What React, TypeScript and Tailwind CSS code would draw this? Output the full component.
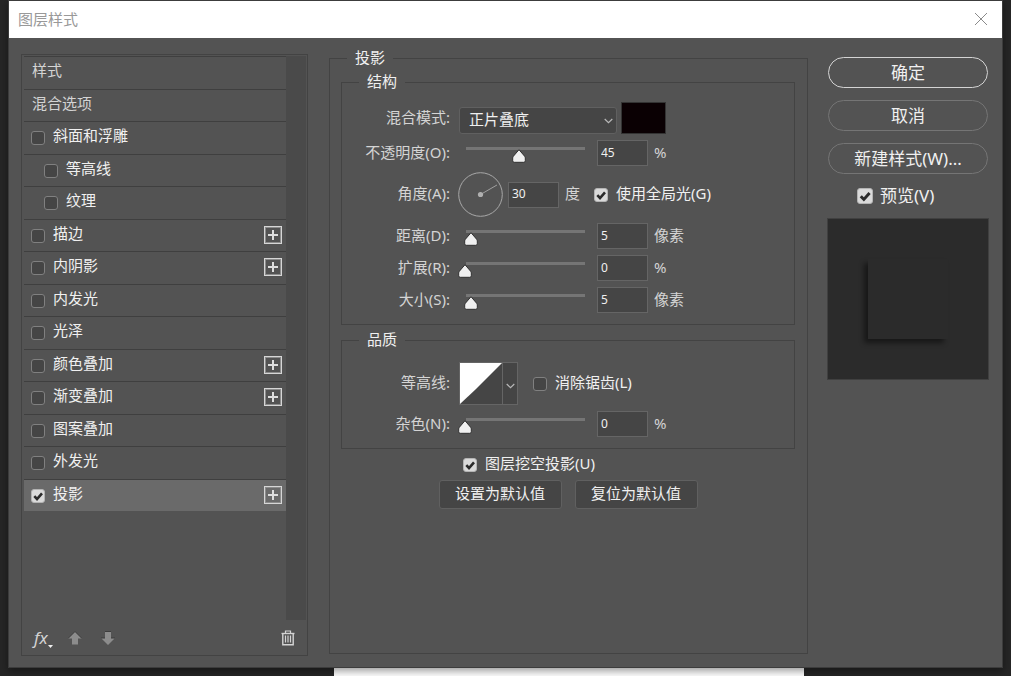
import React, { useState } from 'react'

const styleRows = [
  { id: 'bevel', label: '斜面和浮雕' },
  { id: 'bevelContour', label: '等高线', nested: true },
  { id: 'texture', label: '纹理', nested: true },
  { id: 'stroke', label: '描边', plus: true },
  { id: 'innerShadow', label: '内阴影', plus: true },
  { id: 'innerGlow', label: '内发光' },
  { id: 'satin', label: '光泽' },
  { id: 'colorOverlay', label: '颜色叠加', plus: true },
  { id: 'gradientOverlay', label: '渐变叠加', plus: true },
  { id: 'patternOverlay', label: '图案叠加' },
  { id: 'outerGlow', label: '外发光' },
  { id: 'dropShadow', label: '投影', plus: true },
]

type CheckProps = {
  id: string
  checked: boolean
  onChange: () => void
  large?: boolean
}

function Check({ id, checked, onChange, large }: CheckProps) {
  return (
    <span className={large ? 'relative block size-4 shrink-0' : 'relative block size-[14px] shrink-0'}>
      <input
        id={id}
        type="checkbox"
        checked={checked}
        onChange={onChange}
        className="block size-full appearance-none rounded-[3px] border border-[#808080] bg-[#454545] checked:border-[#b4b4b4] checked:bg-[#dadada]"
      />
      {checked && (
        <svg viewBox="0 0 14 14" className="pointer-events-none absolute inset-0 size-full" fill="none">
          <path d="M3.3 7.2 L6 10 L11 4.4" stroke="#2a2a2a" strokeWidth="2.6" />
        </svg>
      )}
    </span>
  )
}

function Chevron() {
  return (
    <svg width="9" height="6" viewBox="0 0 9 6" fill="none">
      <path d="M0.7 1 L4.5 4.6 L8.3 1" stroke="#b8b8b8" strokeWidth="1.2" />
    </svg>
  )
}

type NumberBoxProps = {
  id: string
  value: number
  onChange: (value: number) => void
}

function NumberBox({ id, value, onChange }: NumberBoxProps) {
  return (
    <input
      id={id}
      type="text"
      value={value}
      onChange={(e) => onChange(Number(e.target.value) || 0)}
      className="h-[26px] w-[51px] shrink-0 border border-[#656565] bg-[#454545] px-[3px] pb-[2px] text-xs text-[#f0f0f0]"
    />
  )
}

type SliderRowProps = {
  id: string
  label: string
  unit: string
  start: number
}

function SliderRow({ id, label, unit, start }: SliderRowProps) {
  const [value, setValue] = useState(start)

  return (
    <div className="flex items-center">
      <label htmlFor={id} className="w-[108px] shrink-0 pb-[3px] text-right">{label}</label>
      <div className="relative ml-4 h-[26px] w-[119px] shrink-0 pt-[7px]">
        <div className="h-[3px] bg-[#757575]" />
        <svg
          width="14"
          height="14"
          viewBox="0 0 14 14"
          className="absolute top-[9px] -ml-2"
          style={{ left: `${Math.min(value, 100)}%` }}
        >
          <path
            d="M7 0.7 L12.6 7.2 Q13.3 8.1 13.3 9 V11.8 Q13.3 13.3 11.8 13.3 H2.2 Q0.7 13.3 0.7 11.8 V9 Q0.7 8.1 1.4 7.2 Z"
            fill="#f0f0f0"
            stroke="#303030"
          />
        </svg>
        <input
          type="range"
          min="0"
          max="100"
          aria-label={label}
          value={value}
          onChange={(e) => setValue(Number(e.target.value))}
          className="absolute inset-0 size-full opacity-0"
        />
      </div>
      <div className="ml-3 flex items-center gap-[6px]">
        <NumberBox id={id} value={value} onChange={setValue} />
        <span className="pb-[3px]">{unit}</span>
      </div>
    </div>
  )
}

function PlusIcon() {
  return (
    <svg width="18" height="18" viewBox="0 0 18 18" fill="none">
      <rect x="0.5" y="0.5" width="17" height="17" stroke="#d6d6d6" />
      <rect x="1.5" y="1.5" width="15" height="15" stroke="#8c8c8c" />
      <path d="M4 9 H14 M9 4 V14" stroke="#dedede" strokeWidth="2" />
    </svg>
  )
}

function StyleList() {
  const [enabled, setEnabled] = useState<Record<string, boolean>>({ dropShadow: true })

  const toggleStyle = (id: string) => {
    setEnabled((prevState) => ({ ...prevState, [id]: !prevState[id] }))
  }

  return (
    <aside className="mt-[5px] flex w-[287px] shrink-0 flex-col border border-[#434343] pt-px pr-px pl-[2px]">
      <div className="flex flex-1">
        <ul className="flex-1">
          <li className="flex items-center border-t border-[#3f3f3f] pb-[6px] pl-2 text-[#d4d4d4] odd:h-[33px] even:h-8">样式</li>
          <li className="flex items-center border-t border-[#3f3f3f] pb-[6px] pl-2 text-[#d4d4d4] odd:h-[33px] even:h-8">混合选项</li>
          {styleRows.map((row) => (
            <li
              key={row.id}
              className={`flex items-center border-t border-[#3f3f3f] pr-1 odd:h-[33px] even:h-8 ${row.nested ? 'pl-5' : 'pl-[7px]'} ${row.id === 'dropShadow' ? 'bg-[#6a6a6a]' : ''}`}
            >
              <Check id={row.id} checked={!!enabled[row.id]} onChange={() => toggleStyle(row.id)} />
              <label htmlFor={row.id} className="flex-1 pb-[6px] pl-2">{row.label}</label>
              {row.plus && (
                <button type="button" aria-label={`${row.label} +`} className="pb-[2px]">
                  <PlusIcon />
                </button>
              )}
            </li>
          ))}
        </ul>
        <div className="w-5 bg-[#4a4a4a]" />
      </div>
      <div className="flex h-[35px] items-center pr-[11px] pl-[10px]">
        <button type="button" className="flex items-end text-[17px] leading-5 text-[#d4d4d4] italic">
          fx
          <svg width="5" height="3" viewBox="0 0 5 3">
            <path d="M0 0 H5 L2.5 3 Z" fill="#f0f0f0" />
          </svg>
        </button>
        <button type="button" aria-label="上移" className="ml-[15px]">
          <svg width="14" height="14" viewBox="0 0 14 14">
            <path d="M7 0.5 L14 7.5 H10 V13.5 H4 V7.5 H0 Z" fill="#8c8c8c" />
            <path d="M0 7.5 L7 0.5 L14 7.5" fill="none" stroke="#3c3c3c" />
          </svg>
        </button>
        <button type="button" aria-label="下移" className="ml-[19px]">
          <svg width="14" height="14" viewBox="0 0 14 14">
            <path d="M4 0.5 H10 V7 H14 L7 14 L0 7 H4 Z" fill="#8c8c8c" />
            <path d="M4 0.5 H10 M0 7 H4 M10 7 H14" fill="none" stroke="#3c3c3c" />
          </svg>
        </button>
        <button type="button" aria-label="删除" className="ml-auto">
          <svg width="14" height="16" viewBox="0 0 14 16" fill="none" stroke="#d4d4d4">
            <path d="M0.5 3.5 H13.5" strokeWidth="1.4" />
            <path d="M4.5 3 V1 H9.5 V3" strokeWidth="1.2" />
            <path d="M1.8 4 V14.7 H12.2 V4" strokeWidth="1.4" />
            <path d="M4.5 5.5 V12.5 M7 5.5 V12.5 M9.5 5.5 V12.5" strokeWidth="1.2" />
          </svg>
        </button>
      </div>
    </aside>
  )
}

function StructureGroup() {
  const [angle, setAngle] = useState(30)
  const [globalLight, setGlobalLight] = useState(true)

  const rad = (angle * Math.PI) / 180

  return (
    <fieldset className="border border-[#434343]">
      <legend className="ml-[17px] px-2 pb-[2px] leading-4 text-[#f0f0f0]">结构</legend>
      <div className="flex flex-col gap-[6px] pt-[11px] pb-[11px]">
        <div className="flex items-center">
          <label htmlFor="blendMode" className="w-[108px] shrink-0 pb-[3px] text-right">混合模式:</label>
          <div className="relative mt-1 ml-[9px] w-[158px] shrink-0">
            <select
              id="blendMode"
              className="block h-[27px] w-full appearance-none rounded-[3px] border border-[#606060] bg-[#454545] pb-[3px] pl-[9px] text-[#f0f0f0]"
            >
              <option>正片叠底</option>
              <option>正常</option>
            </select>
            <span className="pointer-events-none absolute top-[11px] right-1">
              <Chevron />
            </span>
          </div>
          <button type="button" aria-label="阴影颜色" className="ml-1 h-8 w-[45px] border border-[#333333] bg-[#0a0003]" />
        </div>
        <SliderRow id="opacity" label="不透明度(O):" unit="%" start={45} />
        <div className="flex items-center">
          <label htmlFor="angle" className="w-[108px] shrink-0 pb-[3px] text-right">角度(A):</label>
          <svg width="45" height="45" viewBox="0 0 45 45" fill="none" className="ml-2 shrink-0">
            <circle cx="22.5" cy="22.5" r="21.8" stroke="#a8a8a8" />
            <line
              x1="22.5"
              y1="22.5"
              x2={22.5 + 19 * Math.cos(rad)}
              y2={22.5 - 19 * Math.sin(rad)}
              stroke="#a0a0a0"
            />
            <circle cx="22.5" cy="22.5" r="2.6" fill="#b0b0b0" />
          </svg>
          <div className="ml-[5px] flex items-center gap-[6px]">
            <NumberBox id="angle" value={angle} onChange={setAngle} />
            <span className="pb-[3px]">度</span>
          </div>
          <div className="ml-[14px] flex items-center gap-2 text-[#f0f0f0]">
            <Check id="globalLight" checked={globalLight} onChange={() => setGlobalLight(!globalLight)} />
            <label htmlFor="globalLight" className="pb-[3px]">使用全局光(G)</label>
          </div>
        </div>
        <SliderRow id="distance" label="距离(D):" unit="像素" start={5} />
        <SliderRow id="spread" label="扩展(R):" unit="%" start={0} />
        <SliderRow id="size" label="大小(S):" unit="像素" start={5} />
      </div>
    </fieldset>
  )
}

function QualityGroup() {
  const [antiAlias, setAntiAlias] = useState(false)

  return (
    <fieldset className="border border-[#434343]">
      <legend className="ml-[17px] px-2 pb-[2px] leading-4 text-[#f0f0f0]">品质</legend>
      <div className="flex flex-col gap-[6px] pt-[13px] pb-[11px]">
        <div className="flex items-center">
          <label htmlFor="contour" className="w-[108px] shrink-0 pb-[3px] text-right">等高线:</label>
          <button id="contour" type="button" className="ml-[9px] flex h-[43px] w-[59px] shrink-0 border border-[#656565] bg-[#454545]">
            <svg width="42" height="41" viewBox="0 0 42 41">
              <path d="M0 0 H42 L29 13 L16 26 L0 41 Z" fill="#ffffff" />
            </svg>
            <span className="flex h-full flex-1 items-center justify-center border-l border-[#656565] pt-1">
              <Chevron />
            </span>
          </button>
          <div className="ml-[15px] flex items-center gap-2 text-[#f0f0f0]">
            <Check id="antiAlias" checked={antiAlias} onChange={() => setAntiAlias(!antiAlias)} />
            <label htmlFor="antiAlias" className="pb-[3px]">消除锯齿(L)</label>
          </div>
        </div>
        <SliderRow id="noise" label="杂色(N):" unit="%" start={0} />
      </div>
    </fieldset>
  )
}

export default function App() {
  const [knockout, setKnockout] = useState(true)
  const [preview, setPreview] = useState(true)

  return (
    <div className="flex min-h-screen flex-col bg-[#262626] font-['Noto_Sans','Noto_Sans_CJK_SC',sans-serif] text-[15px] leading-[18px] text-[#f0f0f0]">
      <div className="relative mx-2 flex flex-1 flex-col border border-[#3c3c3c] bg-[#535353] shadow-[0_3px_8px_rgba(0,0,0,0.4)]">
        <header className="flex h-[37px] shrink-0 items-center justify-between bg-white pr-[14px] pb-[2px] pl-[9px] text-[#999999]">
          <h1>图层样式</h1>
          <button type="button" aria-label="关闭">
            <svg width="14" height="14" viewBox="0 0 14 14" fill="none">
              <path d="M1 1 L13 13 M13 1 L1 13" stroke="#8a8a8a" />
            </svg>
          </button>
        </header>

        <main className="flex flex-1 pt-[11px] pr-[14px] pb-[11px] pl-3">
          <StyleList />

          <fieldset className="mr-5 mb-[2px] ml-[21px] min-w-0 flex-1 border border-[#434343] pr-3 pl-[11px]">
            <legend className="ml-[6px] px-2 pb-[2px] leading-4">投影</legend>
            <div className="flex flex-col gap-[6px] pt-[6px] text-[#d4d4d4]">
              <StructureGroup />
              <QualityGroup />
              <div className="ml-[122px] flex items-center gap-2 text-[#f0f0f0]">
                <Check id="knockout" checked={knockout} onChange={() => setKnockout(!knockout)} />
                <label htmlFor="knockout" className="pb-[3px] leading-4">图层挖空投影(U)</label>
              </div>
              <div className="flex justify-center gap-[13px] text-[#f0f0f0]">
                <button type="button" className="h-[29px] w-[123px] rounded-[3px] border border-[#606060] bg-[#454545] pb-1">
                  设置为默认值
                </button>
                <button type="button" className="h-[29px] w-[123px] rounded-[3px] border border-[#606060] bg-[#454545] pb-1">
                  复位为默认值
                </button>
              </div>
            </div>
          </fieldset>

          <div className="mt-2 flex w-40 shrink-0 flex-col gap-3 text-[17px] leading-5">
            <button type="button" className="h-[31px] rounded-full border border-[#d4d4d4]">确定</button>
            <button type="button" className="h-[31px] rounded-full border border-[#757575]">取消</button>
            <button type="button" className="h-[31px] rounded-full border border-[#757575]">新建样式(W)...</button>
            <div className="flex items-center gap-[7px] pl-[29px]">
              <Check id="preview" checked={preview} onChange={() => setPreview(!preview)} large />
              <label htmlFor="preview">预览(V)</label>
            </div>
            <div className="-mx-px grid h-[162px] place-items-center border border-[#404040] bg-[#2b2b2b]">
              {preview && <div className="size-20 bg-[#2b2b2b] shadow-[-4px_4px_5px_rgba(0,0,0,0.45)]" />}
            </div>
          </div>
        </main>
      </div>
      <div className="ml-[334px] h-2 w-[470px] bg-white" />
    </div>
  )
}
